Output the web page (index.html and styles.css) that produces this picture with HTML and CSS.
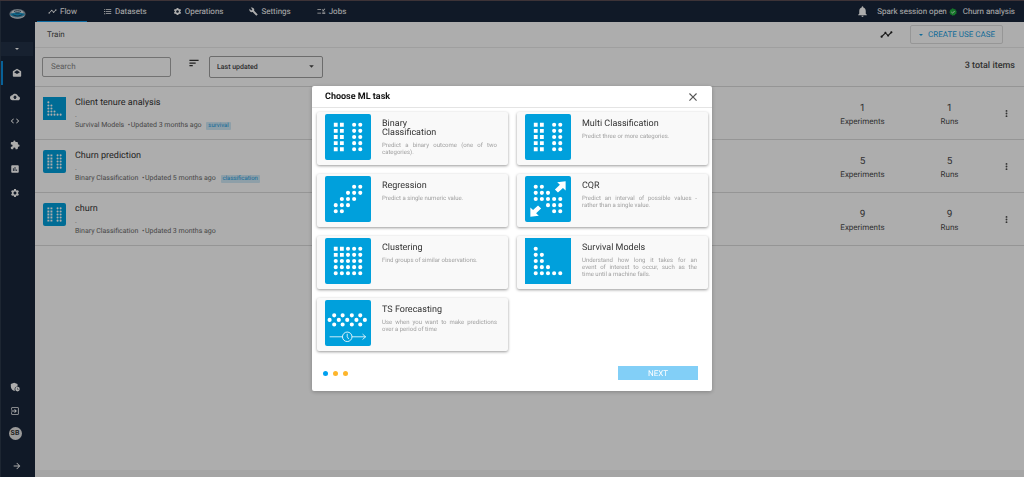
FILE: index.html
```html
<!DOCTYPE html>
<html lang="en">
<head>
<meta charset="utf-8">
<title>Train</title>
<link rel="stylesheet" href="styles.css">
</head>
<body>
<svg class="defs" aria-hidden="true">
  <symbol id="flow" viewBox="0 0 24 24"><path d="M23 8c0 1.100-.9 2-2 2-.18 0-.35-.02-.51-.07l-3.560 3.550c.05.16.07.34.07.52 0 1.100-.9 2-2 2s-2-.9-2-2c0-.18.02-.36.07-.52l-2.550-2.550c-.16.05-.34.07-.52.07s-.36-.02-.52-.07l-4.550 4.560c.05.16.07.33.07.51 0 1.100-.9 2-2 2s-2-.9-2-2 .9-2 2-2c.18 0 .35.02.51.07l4.560-4.550C8.020 9.360 8 9.180 8 9c0-1.100.9-2 2-2s2 .9 2 2c0 .18-.02.36-.07.52l2.550 2.550c.16-.05.34-.07.52-.07s.36.020.52.070l3.550-3.560C19.020 8.350 19 8.180 19 8c0-1.100.9-2 2-2s2 .9 2 2z"/></symbol>
  <symbol id="list" viewBox="0 0 24 24"><path d="M3 5h3v2.500H3zM3 10.800h3v2.500H3zM3 16.500h3V19H3zM8 5h14v2.200H8zM8 11h14v2.200H8zM8 16.700h14v2.200H8z"/></symbol>
  <symbol id="gear" viewBox="0 0 24 24"><path d="M19.140 12.940c.04-.3.060-.61.060-.94 0-.32-.02-.64-.07-.94l2.030-1.580c.18-.14.23-.41.12-.61l-1.920-3.320c-.12-.22-.37-.29-.59-.22l-2.390.96c-.5-.38-1.030-.7-1.620-.94l-.36-2.540c-.04-.24-.24-.41-.48-.41h-3.840c-.24 0-.43.17-.47.41l-.36 2.540c-.59.24-1.130.57-1.620.94l-2.390-.96c-.22-.08-.47 0-.59.22L2.740 8.870c-.12.21-.08.47.12.61l2.030 1.580c-.05.3-.09.63-.09.94s.02.64.070.94l-2.030 1.580c-.18.14-.23.41-.12.61l1.920 3.320c.12.22.37.29.59.22l2.390-.96c.5.38 1.030.7 1.620.94l.36 2.540c.05.24.24.41.48.41h3.840c.24 0 .44-.17.47-.41l.36-2.540c.59-.24 1.130-.56 1.620-.94l2.390.96c.22.08.47 0 .59-.22l1.920-3.320c.12-.22.07-.47-.12-.61l-2.010-1.580zM12 15.600c-1.980 0-3.600-1.620-3.600-3.600s1.620-3.600 3.600-3.600 3.600 1.620 3.600 3.600-1.620 3.600-3.600 3.600z"/></symbol>
  <symbol id="wrench" viewBox="0 0 24 24"><path d="M22.700 19l-9.100-9.100c.9-2.300.4-5-1.500-6.900-2-2-5-2.400-7.400-1.300L9 6 6 9 1.600 4.700C.4 7.100.9 10.100 2.900 12.100c1.900 1.900 4.600 2.400 6.900 1.500l9.100 9.100c.4.4 1 .4 1.400 0l2.300-2.300c.5-.4.5-1.100.1-1.400z"/></symbol>
  <symbol id="jobs" viewBox="0 0 24 24"><path d="M1 6h10v2.200H1zM1 15h10v2.200H1zM14 16.500h8v2.200h-8zM14 12.500h8v2.200h-8zM16.500 11l-3.500-3.500 1.500-1.500 2 2L20.500 4 22 5.500z"/></symbol>
  <symbol id="bell" viewBox="0 0 24 24"><path d="M12 22c1.100 0 2-.9 2-2h-4c0 1.100.9 2 2 2zm6-6v-5c0-3.070-1.640-5.640-4.500-6.320V4c0-.83-.67-1.500-1.500-1.500s-1.500.67-1.500 1.500v.68C7.630 5.360 6 7.920 6 11v5l-2 2v1h16v-1l-2-2z"/></symbol>
  <symbol id="check" viewBox="0 0 24 24"><path fill="#1fae3d" d="M12 1l3 2.500 4-.2 1 3.800 3.200 2.300L21.800 13l1 3.700-3.600 1.600L17.500 22l-3.800-.6L10.500 23l-2.700-2.900-3.900-.6-.4-3.900L1 12.500l1.900-3.400L3 5.200l3.800-1L9 1.300z"/><path fill="none" stroke="#fff" stroke-width="2.500" d="M7 12l3.500 3.500L17 9"/></symbol>
  <symbol id="drafts" viewBox="0 0 24 24"><path d="M22 9c0-.7-.4-1.300-.9-1.700L12 2 2.900 7.300C2.400 7.700 2 8.300 2 9v10c0 1.100.9 2 2 2h16c1.100 0 2-.9 2-2zM12 14.500L5 10l7-4.500L19 10z"/></symbol>
  <symbol id="cloud" viewBox="0 0 24 24"><path d="M19.350 10.040C18.670 6.590 15.640 4 12 4 9.110 4 6.600 5.640 5.350 8.040 2.340 8.360 0 10.910 0 14c0 3.310 2.690 6 6 6h13c2.760 0 5-2.240 5-5 0-2.640-2.050-4.780-4.650-4.960zM14 13v4h-4v-4H7l5-5 5 5h-3z"/></symbol>
  <symbol id="code" viewBox="0 0 24 24"><path d="M9.400 16.600L4.800 12l4.600-4.600L8 6l-6 6 6 6 1.400-1.400zm5.200 0l4.600-4.600-4.600-4.600L16 6l6 6-6 6-1.400-1.400z"/></symbol>
  <symbol id="puzzle" viewBox="0 0 24 24"><path d="M20.500 11H19V7c0-1.100-.9-2-2-2h-4V3.500a2.500 2.500 0 0 0-5 0V5H4c-1.100 0-2 .9-2 2v3.800h1.500a2.700 2.700 0 0 1 0 5.400H2V20c0 1.100.9 2 2 2h3.800v-1.500a2.700 2.700 0 0 1 5.400 0V22H17c1.100 0 2-.9 2-2v-4h1.500a2.500 2.500 0 0 0 0-5z"/></symbol>
  <symbol id="chart" viewBox="0 0 24 24"><path d="M19 3H5c-1.100 0-2 .9-2 2v14c0 1.100.9 2 2 2h14c1.100 0 2-.9 2-2V5c0-1.100-.9-2-2-2zM9 17H7v-7h2v7zm4 0h-2V7h2v10zm4 0h-2v-4h2v4z"/></symbol>
  <symbol id="shield" viewBox="0 0 24 24"><path d="M10 2l8 3v6a7 7 0 0 0-7 7c0 1.400.4 2.700 1 3.700C6 21 2 16 2 11V5z"/><circle cx="18" cy="17" r="5.500"/><path fill="#19263a" d="M17.400 14h1.200v3h2v1.200h-3.200z"/></symbol>
  <symbol id="exit" viewBox="0 0 24 24"><path d="M10.090 15.590L11.500 17l5-5-5-5-1.410 1.410L12.670 11H3v2h9.670l-2.580 2.590zM19 3H5c-1.110 0-2 .9-2 2v4h2V5h14v14H5v-4H3v4c0 1.100.89 2 2 2h14c1.100 0 2-.9 2-2V5c0-1.100-.9-2-2-2z"/></symbol>
  <symbol id="arrow" viewBox="0 0 24 24"><path d="M12 4l-1.410 1.410L16.170 11H4v2h12.170l-5.580 5.590L12 20l8-8z"/></symbol>
  <symbol id="caret" viewBox="0 0 24 24"><path d="M4 8l8 8 8-8z"/></symbol>
  <symbol id="sort" viewBox="0 0 24 24"><path d="M1 4h22v3H1zM1 10.500h15v3H1zM1 17h8v3H1z"/></symbol>
  <symbol id="more" viewBox="0 0 24 24"><circle cx="12" cy="5" r="2.500"/><circle cx="12" cy="12" r="2.500"/><circle cx="12" cy="19" r="2.500"/></symbol>
  <symbol id="close" viewBox="0 0 24 24"><path d="M4.500 2.500l-2 2 7.500 7.500-7.500 7.500 2 2L12 14l7.500 7.500 2-2L14 12l7.500-7.500-2-2L12 10z"/></symbol>

  <symbol id="classes" viewBox="0 0 60 60"><path class="squares" d="M14 14h0M22 14h0M14 22h0M22 22h0M14 30h0M22 30h0M14 38h0M22 38h0M14 46h0M22 46h0"/><path class="dots" d="M38 14h0M46 14h0M38 22h0M46 22h0M38 30h0M46 30h0M38 38h0M46 38h0M38 46h0M46 46h0"/></symbol>
  <symbol id="regression" viewBox="0 0 60 60"><path class="dots" d="M38 14h0M46 14h0M30 22h0M38 22h0M46 22h0M22 30h0M30 30h0M38 30h0M14 38h0M22 38h0M30 38h0M14 46h0M22 46h0"/></symbol>
  <symbol id="cqr" viewBox="0 0 60 60"><path class="dots" d="M14 14h0M22 14h0M14 22h0M22 22h0M30 22h0M14 30h0M22 30h0M30 30h0M38 30h0M46 30h0M30 38h0M38 38h0M46 38h0M38 46h0M46 46h0"/><path fill="#fff" d="M53 7v12l-3.500-3.500-6.500 6-4-4 6.500-6L42 8zM7 53V41l3.500 3.500 6.500-6 4 4-6.500 6L18 52z"/></symbol>
  <symbol id="clustering" viewBox="0 0 60 60"><path class="squares" d="M14 14h0M22 14h0M14 22h0M22 22h0"/><path class="dots" d="M30 14h0M38 14h0M46 14h0M30 22h0M38 22h0M46 22h0M14 30h0M22 30h0M30 30h0M38 30h0M46 30h0M14 38h0M22 38h0M30 38h0M38 38h0M46 38h0M14 46h0M22 46h0M30 46h0M38 46h0M46 46h0"/></symbol>
  <symbol id="survival" viewBox="0 0 60 60"><path class="dots" d="M14 14h0M14 22h0M22 22h0M14 30h0M22 30h0M14 38h0M22 38h0M30 38h0M14 46h0M22 46h0M30 46h0M38 46h0M46 46h0"/></symbol>
  <symbol id="forecast" viewBox="0 0 60 60"><path class="dots" d="M6 26h0M18 26h0M29 26h0M41 26h0M52 26h0M12 20h0M23 20h0M35 20h0M46 20h0M12 32h0M23 32h0M35 32h0M46 32h0"/><path fill="none" stroke="#fff" stroke-opacity=".8" stroke-width="1.300" d="M6 48h17M35 48h18M49 44.500l4 3.500-4 3.500M29 44v4l2 3"/><circle cx="29" cy="48" r="6.200" fill="none" stroke="#fff" stroke-opacity=".85" stroke-width="1.300"/></symbol>
</svg>

<div class="app">
  <aside class="sidebar">
    <svg class="logo" viewBox="0 0 48 34" role="img" aria-label="Home"><ellipse cx="24" cy="17" rx="23" ry="14" fill="#8b99a6"/><ellipse cx="24" cy="13" rx="17" ry="8" fill="#dbe2e6"/><path d="M3 17c10-6 32-6 42 0-5 10-37 10-42 0z" fill="#159bd0"/><path d="M10 18c8 6 20 6 28 0M14 10c6-3 14-3 20 0M18 14h12" fill="none" stroke="#24384c" stroke-width="2.500"/><path d="M5 23c10 7 28 7 38 0" fill="none" stroke="#d6dde2" stroke-width="2.500"/></svg>
    <button class="switcher" aria-label="Switch project"><svg><use href="#caret"/></svg></button>
    <nav class="side-nav">
      <a class="active" href="#" aria-label="Projects"><svg><use href="#drafts"/></svg></a>
      <a href="#" aria-label="Upload"><svg><use href="#cloud"/></svg></a>
      <a href="#" aria-label="Code"><svg><use href="#code"/></svg></a>
      <a href="#" aria-label="Plugins"><svg><use href="#puzzle"/></svg></a>
      <a href="#" aria-label="Reports"><svg><use href="#chart"/></svg></a>
      <a href="#" aria-label="Configuration"><svg><use href="#gear"/></svg></a>
    </nav>
    <div class="side-foot">
      <a href="#" aria-label="Admin"><svg><use href="#shield"/></svg></a>
      <a href="#" aria-label="Sign out"><svg><use href="#exit"/></svg></a>
      <span class="avatar">SB</span>
      <button class="expand" aria-label="Expand"><svg><use href="#arrow"/></svg></button>
    </div>
  </aside>

  <div class="main">
    <header class="topbar">
      <nav class="tabs">
        <a class="current" href="#"><svg><use href="#flow"/></svg>Flow</a>
        <a href="#"><svg><use href="#list"/></svg>Datasets</a>
        <a href="#"><svg><use href="#gear"/></svg>Operations</a>
        <a href="#"><svg><use href="#wrench"/></svg>Settings</a>
        <a href="#"><svg><use href="#jobs"/></svg>Jobs</a>
      </nav>
      <div class="status">
        <svg class="bell"><use href="#bell"/></svg>
        <span class="session">Spark session open <svg><use href="#check"/></svg></span>
        <span>Churn analysis</span>
      </div>
    </header>

    <div class="titlebar">
      <h1>Train</h1>
      <svg class="trend"><use href="#flow"/></svg>
      <button class="create"><svg><use href="#caret"/></svg>CREATE USE CASE</button>
    </div>

    <div class="filters">
      <input class="search" type="text" placeholder="Search" aria-label="Search">
      <svg class="sort"><use href="#sort"/></svg>
      <div class="select">
        <select aria-label="Sort by"><option>Last updated</option></select>
        <svg><use href="#caret"/></svg>
      </div>
      <p class="total">3 total items</p>
    </div>

    <ul class="cases">
      <li>
        <svg class="tile"><use href="#survival"/></svg>
        <div class="info"><h2>Client tenure analysis</h2><p>.</p><p>Survival Models &nbsp;•&#8202;Updated 3 months ago <span class="tag">survival</span></p></div>
        <div class="stat"><b>1</b>Experiments</div><div class="stat"><b>1</b>Runs</div>
        <button class="more" aria-label="More"><svg><use href="#more"/></svg></button>
      </li>
      <li>
        <svg class="tile rounded"><use href="#classes"/></svg>
        <div class="info"><h2>Churn prediction</h2><p>.</p><p>Binary Classification &nbsp;•&#8202;Updated 5 months ago <span class="tag">classification</span></p></div>
        <div class="stat"><b>5</b>Experiments</div><div class="stat"><b>5</b>Runs</div>
        <button class="more" aria-label="More"><svg><use href="#more"/></svg></button>
      </li>
      <li>
        <svg class="tile rounded"><use href="#classes"/></svg>
        <div class="info"><h2>churn</h2><p>.</p><p>Binary Classification &nbsp;•&#8202;Updated 3 months ago</p></div>
        <div class="stat"><b>9</b>Experiments</div><div class="stat"><b>9</b>Runs</div>
        <button class="more" aria-label="More"><svg><use href="#more"/></svg></button>
      </li>
    </ul>
    <div class="bottombar"></div>
  </div>
</div>

<div class="overlay">
  <section class="dialog" role="dialog" aria-labelledby="dialog-title">
    <header class="dialog-head">
      <h2 id="dialog-title">Choose ML task</h2>
      <button aria-label="Close"><svg><use href="#close"/></svg></button>
    </header>
    <div class="tasks">
      <button class="task"><svg class="tile rounded"><use href="#classes"/></svg><span class="text"><strong>Binary<br>Classification</strong><span>Predict a binary outcome (one of two categories).</span></span></button>
      <button class="task"><svg class="tile rounded"><use href="#classes"/></svg><span class="text"><strong>Multi Classification</strong><span>Predict three or more categories.</span></span></button>
      <button class="task"><svg class="tile rounded"><use href="#regression"/></svg><span class="text"><strong>Regression</strong><span>Predict a single numeric value.</span></span></button>
      <button class="task"><svg class="tile rounded"><use href="#cqr"/></svg><span class="text"><strong>CQR</strong><span>Predict an interval of possible values - rather than a single value.</span></span></button>
      <button class="task"><svg class="tile rounded"><use href="#clustering"/></svg><span class="text"><strong>Clustering</strong><span>Find groups of similar observations.</span></span></button>
      <button class="task"><svg class="tile"><use href="#survival"/></svg><span class="text"><strong>Survival Models</strong><span>Understand how long it takes for an event&nbsp;of interest to occur, such as the time&nbsp;until&nbsp;a machine fails.</span></span></button>
      <button class="task"><svg class="tile rounded"><use href="#forecast"/></svg><span class="text"><strong>TS Forecasting</strong><span>Use when you want to make predictions over a period of time</span></span></button>
    </div>
    <footer class="dialog-foot">
      <span class="step on"></span><span class="step"></span><span class="step"></span>
      <button class="next">NEXT</button>
    </footer>
  </section>
</div>
</body>
</html>
```
FILE: styles.css
```css
* { box-sizing: border-box; }
body { margin: 0; font: 8px/10px Roboto, sans-serif; color: #4b4b4b; background: #19263a; text-rendering: geometricPrecision; }
h1, h2, p, ul { margin: 0; padding: 0; font-weight: 400; }
a { color: inherit; text-decoration: none; }
button, input, select { font: inherit; color: inherit; text-rendering: inherit; }
button { background: none; border: 0; padding: 0; }
svg { display: block; flex: none; width: 10px; height: 10px; fill: currentColor; }
.defs { position: absolute; width: 0; height: 0; }
.dots, .squares { fill: none; stroke: #fff; stroke-width: 5.4; stroke-linecap: round; }
.squares { stroke-linecap: square; stroke-width: 5; }
.tile { background: #00a0dc; }
.rounded { border-radius: 2px; }

.app { display: flex; min-height: 100vh; border-top: 1px solid #5a4c52; }
.sidebar { width: 35px; display: flex; flex-direction: column; align-items: center; color: #fff; background: #19263a; border-left: 1px solid #2c394b; padding-right: 2px; }
.logo { width: 17px; height: 12px; margin: 7px 0 22px; }
.switcher { width: 100%; height: 14px; display: flex; justify-content: center; align-items: center; background: #233147; }
.switcher svg { width: 6px; height: 6px; }
.side-nav { width: 100%; padding-top: 5px; }
.side-nav a { height: 24px; display: flex; align-items: center; justify-content: center; padding-right: 4px; }
.side-nav a.active { border-left: 2px solid #0d8fe0; padding-right: 2px; }
.side-foot { margin-top: auto; display: flex; flex-direction: column; align-items: center; padding: 0 4px 6px 0; }
.side-foot a { height: 24px; display: flex; align-items: center; }
.avatar { width: 13px; height: 13px; margin-top: 4px; border-radius: 50%; background: #e4e4e4; color: #333; font-size: 7px; line-height: 13px; font-weight: 700; text-align: center; }
.expand { margin: 21px 0 0 4px; }

.main { flex: 1; min-width: 0; display: flex; flex-direction: column; background: #fff; }
.topbar { height: 21px; display: flex; justify-content: space-between; background: #19263a; color: #fff; padding: 0 9px 0 2px; }
.tabs { display: flex; gap: 5px; }
.tabs a { display: flex; align-items: center; gap: 3px; padding: 1px 10px 0 11px; border-bottom: 1px solid transparent; }
.tabs a.current { border-color: #16a0f0; }
.tabs svg { width: 9px; height: 9px; }
.status { display: flex; align-items: center; }
.status .bell { width: 13px; height: 13px; margin-right: 8px; }
.session { display: flex; align-items: center; gap: 2px; margin-right: 6px; }
.session svg { width: 8px; height: 8px; }

.titlebar { height: 26px; display: flex; align-items: center; padding: 0 21px 0 12px; border-bottom: 1px solid #ebebeb; }
.titlebar h1 { flex: 1; font-size: 8px; }
.trend { width: 13px; height: 13px; margin-right: 17px; color: #222; }
.create { height: 19px; display: flex; align-items: center; gap: 4px; padding: 0 7px; border: 1px solid #dedede; border-radius: 2px; color: #1ba0e2; }
.create svg { width: 6px; height: 6px; }

.filters { height: 38px; display: flex; align-items: center; padding: 0 9px 1px 7px; }
.search { width: 129px; height: 20px; padding: 0 8px; border: 1px solid #a8a8a8; border-radius: 2px; background: none; color: #333; }
.search::placeholder { color: #888; opacity: 1; }
.sort { margin: 0 10px 8px 18px; color: #333; }
.select { display: flex; align-items: center; width: 114px; height: 22px; border: 1px solid #a0a0a0; border-radius: 2px; padding: 0 7px; color: #444; }
.select select { flex: 1; appearance: none; border: 0; background: none; padding: 0; font-size: 7px; font-weight: 500; }
.select svg { width: 7px; height: 7px; }
.total { margin-left: auto; font-size: 9px; line-height: 11px; font-weight: 500; }

.cases { list-style: none; border-top: 1px solid #dcdcdc; }
.cases li { display: flex; align-items: flex-start; padding: 10px 13px 0 8px; height: 53px; border-bottom: 1px solid #dcdcdc; }
.cases .tile { width: 23px; height: 23px; margin-right: 9px; }
.info { flex: 1; font-size: 7px; line-height: 10px; color: #6a6a6a; }
.info h2 { font-size: 9px; line-height: 13px; color: #333; }
.tag { display: inline-block; margin-left: 3px; padding: 0 2px; font-size: 6px; line-height: 8px; color: #1ba0e2; background: #d2eaf8; border-radius: 1px; }
.stat { width: 87px; text-align: center; padding-top: 5px; line-height: 13px; }
.stat b { display: block; font-size: 10px; font-weight: 400; }
.more { margin: 12px 0 0 9px; }
.more svg { width: 9px; height: 9px; }
.bottombar { height: 7px; margin-top: auto; background: #f3f3f3; }

.overlay { position: fixed; inset: 0; display: flex; align-items: center; justify-content: center; background: rgba(0, 0, 0, .32); }
.dialog { width: 400px; background: #fff; border-radius: 2px; box-shadow: 0 1px 4px rgba(0, 0, 0, .25); }
.dialog-head { display: flex; align-items: center; justify-content: space-between; height: 22px; padding: 0 14px 0 13px; border-bottom: 1px solid #e4e4e4; color: #555; }
.dialog-head h2 { font-size: 9px; font-weight: 700; color: #111; }
.dialog-head svg { width: 10px; height: 10px; }
.tasks { display: grid; grid-template-columns: 1fr 1fr; gap: 9px; padding: 4px 4px 0 5px; }
.task { display: flex; align-items: flex-start; height: 53px; padding: 2px 11px 0 8px; text-align: left; background: #f9f9f9; border-radius: 2px; box-shadow: 0 1px 3px rgba(0, 0, 0, .4); }
.task .tile { width: 46px; height: 46px; margin-right: 11px; }
.text { flex: 1; padding-top: 6px; }
.text strong { display: block; font-size: 9px; line-height: 9px; font-weight: 400; color: #333; margin-bottom: 4px; }
.text span { display: block; font-size: 6px; line-height: 7px; text-align: justify; color: #a0a0a0; }
.dialog-foot { display: flex; align-items: center; gap: 5px; padding: 15px 14px 11px 11px; }
.step { width: 5px; height: 5px; border-radius: 50%; background: #fdb52c; }
.step.on { background: #00a0f0; }
.next { width: 80px; height: 14px; padding-top: 1px; margin-left: auto; background: #82cff7; color: #fff; }
```
